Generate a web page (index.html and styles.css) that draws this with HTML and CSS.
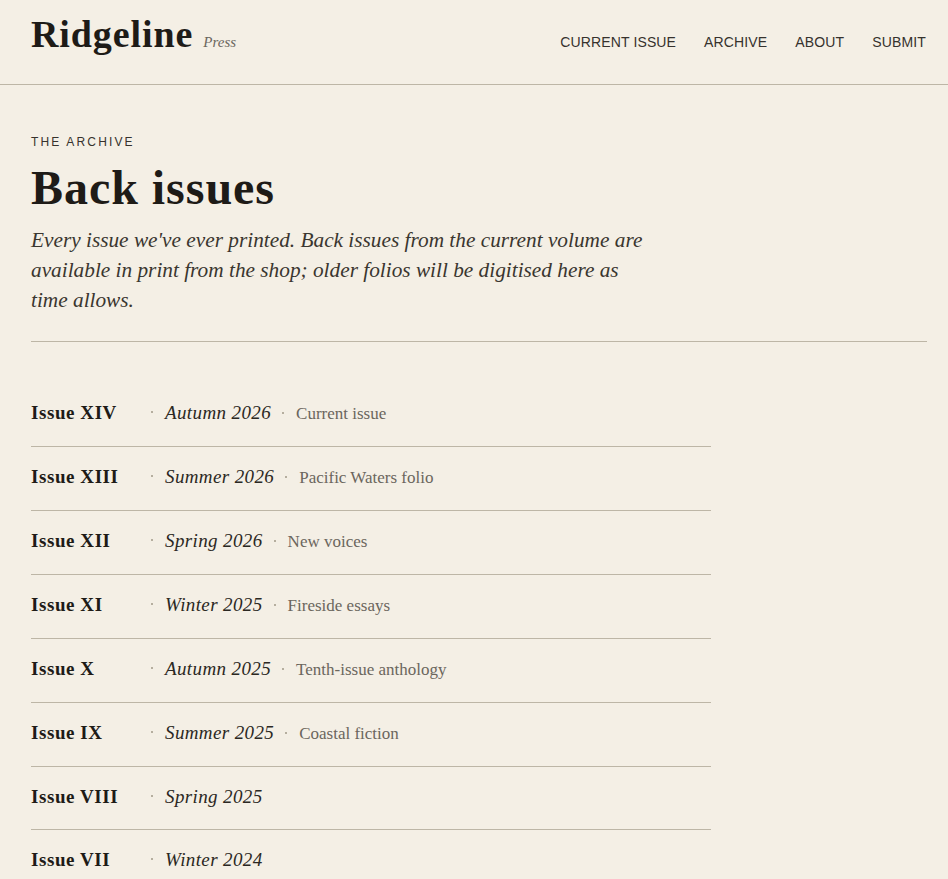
FILE: index.html
```html
<!DOCTYPE html>
<html>
<head>
    <title>Back issues — Ridgeline Press</title>
    <link rel="stylesheet" href="styles.css">
</head>
<body>
    <header class="site-header">
        <a class="brand" href="#">
            <span class="brand-name">Ridgeline</span>
            <span class="brand-sub">Press</span>
        </a>
        <nav class="site-nav">
            <a href="#">Current issue</a>
            <a href="#">Archive</a>
            <a href="#">About</a>
            <a href="#">Submit</a>
        </nav>
    </header>

    <main class="page">
        <div class="intro">
            <p class="eyebrow">The archive</p>
            <h1>Back issues</h1>
            <p class="lede">Every issue we've ever printed. Back issues from the current volume are available in print from the shop; older folios will be digitised here as time allows.</p>
        </div>

        <ul class="issues">
            <li class="issue">
                <span class="issue-no">Issue XIV</span>
                <span class="issue-date">Autumn 2026</span>
                <span class="issue-note">Current issue</span>
            </li>
            <li class="issue">
                <span class="issue-no">Issue XIII</span>
                <span class="issue-date">Summer 2026</span>
                <span class="issue-note">Pacific Waters folio</span>
            </li>
            <li class="issue">
                <span class="issue-no">Issue XII</span>
                <span class="issue-date">Spring 2026</span>
                <span class="issue-note">New voices</span>
            </li>
            <li class="issue">
                <span class="issue-no">Issue XI</span>
                <span class="issue-date">Winter 2025</span>
                <span class="issue-note">Fireside essays</span>
            </li>
            <li class="issue">
                <span class="issue-no">Issue X</span>
                <span class="issue-date">Autumn 2025</span>
                <span class="issue-note">Tenth-issue anthology</span>
            </li>
            <li class="issue">
                <span class="issue-no">Issue IX</span>
                <span class="issue-date">Summer 2025</span>
                <span class="issue-note">Coastal fiction</span>
            </li>
            <li class="issue">
                <span class="issue-no">Issue VIII</span>
                <span class="issue-date">Spring 2025</span>
            </li>
            <li class="issue">
                <span class="issue-no">Issue VII</span>
                <span class="issue-date">Winter 2024</span>
            </li>
            <li class="issue">
                <span class="issue-no">Issue VI</span>
                <span class="issue-date">Autumn 2024</span>
            </li>
        </ul>
    </main>
</body>
</html>
```

FILE: styles.css
```css
body {
    margin: 0;
    background-color: #f4efe5;
    color: #1e1b17;
    font-family: "Liberation Serif", "Times New Roman", serif;
}
a {
    color: inherit;
    text-decoration: none;
}
.site-header {
    display: flex;
    align-items: baseline;
    justify-content: space-between;
    height: 72px;
    padding: 12px 22px 0 31px;
    border-bottom: 1px solid #bdb6a6;
}
.brand {
    display: flex;
    align-items: baseline;
    gap: 10px;
}
.brand-name {
    font-size: 38px;
    line-height: 1.2;
    font-weight: bold;
    letter-spacing: 0.024em;
}
.brand-sub {
    font-size: 15px;
    font-style: italic;
    color: #6b665d;
}
.site-nav {
    display: flex;
    gap: 28px;
    font-family: "Liberation Sans", Arial, sans-serif;
    font-size: 14px;
    letter-spacing: 0.01em;
    text-transform: uppercase;
    color: #36322d;
}
.page {
    padding: 0 21px 40px 31px;
}
.intro {
    padding: 50px 0 26px;
    border-bottom: 1px solid #bdb6a6;
}
.eyebrow {
    margin: 0;
    font-family: "Liberation Sans", Arial, sans-serif;
    font-size: 12px;
    letter-spacing: 0.18em;
    text-transform: uppercase;
    color: #36322d;
}
h1 {
    margin: 10px 0 8px;
    font-size: 48px;
    line-height: 1.2;
    font-weight: bold;
    letter-spacing: 0.02em;
}
.lede {
    margin: 0;
    max-width: 620px;
    font-size: 21.3px;
    line-height: 30px;
    font-style: italic;
    color: #3a362f;
}
.issues {
    list-style: none;
    margin: 41px 0 0;
    padding: 0;
    max-width: 680px;
}
.issue {
    display: flex;
    align-items: baseline;
    padding: 18px 0 21px;
    line-height: 23px;
    border-bottom: 1px solid #bdb6a6;
}
.issue-no {
    width: 120px;
    font-size: 19px;
    font-weight: bold;
    letter-spacing: 0.03em;
}
.issue-date::before,
.issue-note::before {
    content: "";
    display: inline-block;
    width: 2px;
    height: 2px;
    background-color: #b5ae9f;
    vertical-align: 0.3em;
    margin-right: 12px;
}
.issue-date {
    font-size: 19px;
    font-style: italic;
    letter-spacing: 0.02em;
    color: #2b2823;
}
.issue-note {
    margin-left: 11px;
    font-size: 17px;
    color: #6b665d;
}
```
